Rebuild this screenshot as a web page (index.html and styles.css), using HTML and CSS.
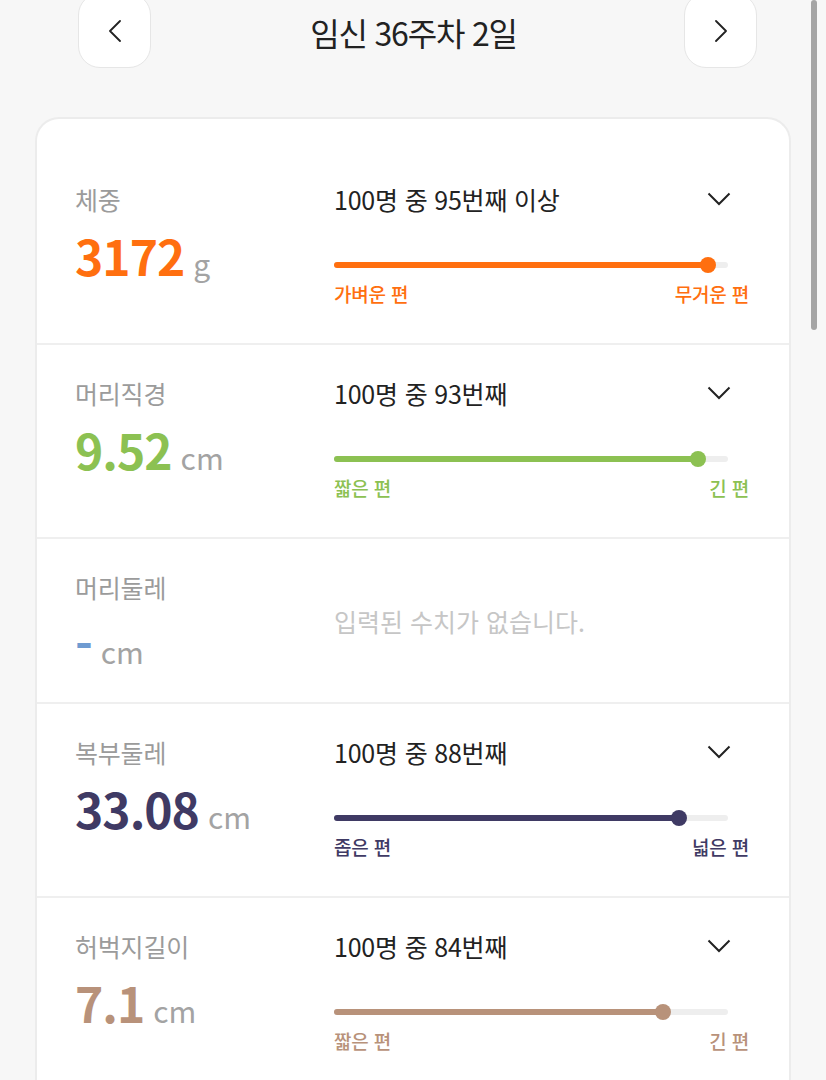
FILE: index.html
```html
<!DOCTYPE html>
<html lang="ko">
<head>
<meta charset="utf-8">
<title>임신 36주차 2일</title>
<link rel="stylesheet" href="styles.css">
</head>
<body>
<div class="header">
  <button class="nav-btn" aria-label="이전">
    <svg width="14" height="22" viewBox="0 0 14 22"><polyline points="12,1 2,11 12,21" fill="none" stroke="#222" stroke-width="1.8" stroke-linejoin="round" stroke-linecap="round"/></svg>
  </button>
  <div class="title">임신 36주차 2일</div>
  <button class="nav-btn" aria-label="다음">
    <svg width="14" height="22" viewBox="0 0 14 22"><polyline points="2,1 12,11 2,21" fill="none" stroke="#222" stroke-width="1.8" stroke-linejoin="round" stroke-linecap="round"/></svg>
  </button>
</div>

<div class="card">
  <div class="row">
    <div class="left">
      <div class="label">체중</div>
      <div class="value orange">3172<span class="unit">g</span></div>
    </div>
    <div class="right orange">
      <div class="rank"><span>100명 중 95번째 이상</span><svg class="chev" width="24" height="14" viewBox="0 0 24 14"><polyline points="1.5,1.5 12,12 22.5,1.5" fill="none" stroke="#222" stroke-width="2"/></svg></div>
      <div class="track"><div class="fill" style="width:95%"></div></div>
      <div class="ends"><span>가벼운 편</span><span>무거운 편</span></div>
    </div>
  </div>

  <div class="row">
    <div class="left">
      <div class="label">머리직경</div>
      <div class="value green">9.52<span class="unit">cm</span></div>
    </div>
    <div class="right green">
      <div class="rank"><span>100명 중 93번째</span><svg class="chev" width="24" height="14" viewBox="0 0 24 14"><polyline points="1.5,1.5 12,12 22.5,1.5" fill="none" stroke="#222" stroke-width="2"/></svg></div>
      <div class="track"><div class="fill" style="width:92.5%"></div></div>
      <div class="ends"><span>짧은 편</span><span>긴 편</span></div>
    </div>
  </div>

  <div class="row row-empty">
    <div class="left">
      <div class="label">머리둘레</div>
      <div class="value blue">-<span class="unit">cm</span></div>
    </div>
    <div class="right">
      <div class="empty">입력된 수치가 없습니다.</div>
    </div>
  </div>

  <div class="row">
    <div class="left">
      <div class="label">복부둘레</div>
      <div class="value navy">33.08<span class="unit">cm</span></div>
    </div>
    <div class="right navy">
      <div class="rank"><span>100명 중 88번째</span><svg class="chev" width="24" height="14" viewBox="0 0 24 14"><polyline points="1.5,1.5 12,12 22.5,1.5" fill="none" stroke="#222" stroke-width="2"/></svg></div>
      <div class="track"><div class="fill" style="width:87.6%"></div></div>
      <div class="ends"><span>좁은 편</span><span>넓은 편</span></div>
    </div>
  </div>

  <div class="row">
    <div class="left">
      <div class="label">허벅지길이</div>
      <div class="value tan">7.1<span class="unit">cm</span></div>
    </div>
    <div class="right tan">
      <div class="rank"><span>100명 중 84번째</span><svg class="chev" width="24" height="14" viewBox="0 0 24 14"><polyline points="1.5,1.5 12,12 22.5,1.5" fill="none" stroke="#222" stroke-width="2"/></svg></div>
      <div class="track"><div class="fill" style="width:83.5%"></div></div>
      <div class="ends"><span>짧은 편</span><span>긴 편</span></div>
    </div>
  </div>
</div>

<div class="scrollbar"></div>
</body>
</html>
```

FILE: styles.css
```css
* { box-sizing: border-box; }

html, body {
  margin: 0;
  padding: 0;
}

body {
  background: #f7f7f7;
  font-family: "Noto Sans CJK KR", "Noto Sans", sans-serif;
  color: #222;
  overflow: hidden;
}

.header {
  display: flex;
  align-items: flex-start;
  height: 67px;
  padding: 0 69px 0 78px;
}

.nav-btn {
  width: 73px;
  height: 75px;
  margin-top: -7px;
  background: #fff;
  border: 1.5px solid #e6e6e6;
  border-radius: 22px;
  display: flex;
  align-items: center;
  justify-content: center;
  padding: 0;
  flex: none;
}

.title {
  flex: 1;
  text-align: center;
  font-size: 32px;
  line-height: 40px;
  padding-top: 12px;
  padding-right: 8px;
  letter-spacing: -1.2px;
  color: #222;
}

.card {
  margin: 50px 35px 0;
  background: #fff;
  border: 2px solid #ececec;
  border-bottom: none;
  border-radius: 24px 24px 0 0;
  padding-top: 32px;
}

.row {
  display: flex;
  align-items: flex-start;
  padding: 31px 40px 36px 38px;
  border-bottom: 2px solid #efefef;
}

.row-empty {
  align-items: center;
  padding-bottom: 35px;
}

.left {
  width: 259px;
  flex: none;
}

.label {
  font-size: 25px;
  line-height: 34px;
  color: #9b9b9b;
  letter-spacing: -0.2px;
}

.value {
  margin-top: 15px;
  font-size: 48px;
  line-height: 48px;
  font-weight: 700;
  display: flex;
  align-items: baseline;
  letter-spacing: -1px;
}

.unit {
  font-size: 30px;
  line-height: 30px;
  font-weight: 400;
  color: #a3a3a3;
  margin-left: 9px;
  letter-spacing: 0;
}

.right {
  flex: 1;
}

.rank {
  display: flex;
  justify-content: space-between;
  align-items: center;
  height: 34px;
  font-size: 25px;
  line-height: 34px;
  color: #222;
  letter-spacing: -0.2px;
  padding-right: 18px;
}

.chev {
  display: block;
  margin-top: 0;
}

.track {
  margin-top: 46px;
  width: 394px;
  height: 6px;
  border-radius: 3px;
  background: #eeeeee;
}

.fill {
  position: relative;
  height: 100%;
  border-radius: 3px;
  background: currentColor;
}

.fill::after {
  content: "";
  position: absolute;
  right: -8px;
  top: -5px;
  width: 16px;
  height: 16px;
  border-radius: 50%;
  background: currentColor;
}

.ends {
  margin-top: 13px;
  display: flex;
  justify-content: space-between;
  font-size: 19px;
  line-height: 26px;
  font-weight: 500;
  letter-spacing: -0.2px;
}

.empty {
  font-size: 25px;
  line-height: 32px;
  color: #c6c6c6;
  padding-top: 4px;
  letter-spacing: 0;
}

.orange { color: #ff6f0f; }
.green { color: #8cc152; }
.blue { color: #6f9bd1; }
.navy { color: #3f3a64; }
.tan { color: #b8927a; }

.scrollbar {
  position: fixed;
  top: 0;
  right: 9px;
  width: 6px;
  height: 330px;
  border-radius: 3px;
  background: #a5a5a5;
}
```
